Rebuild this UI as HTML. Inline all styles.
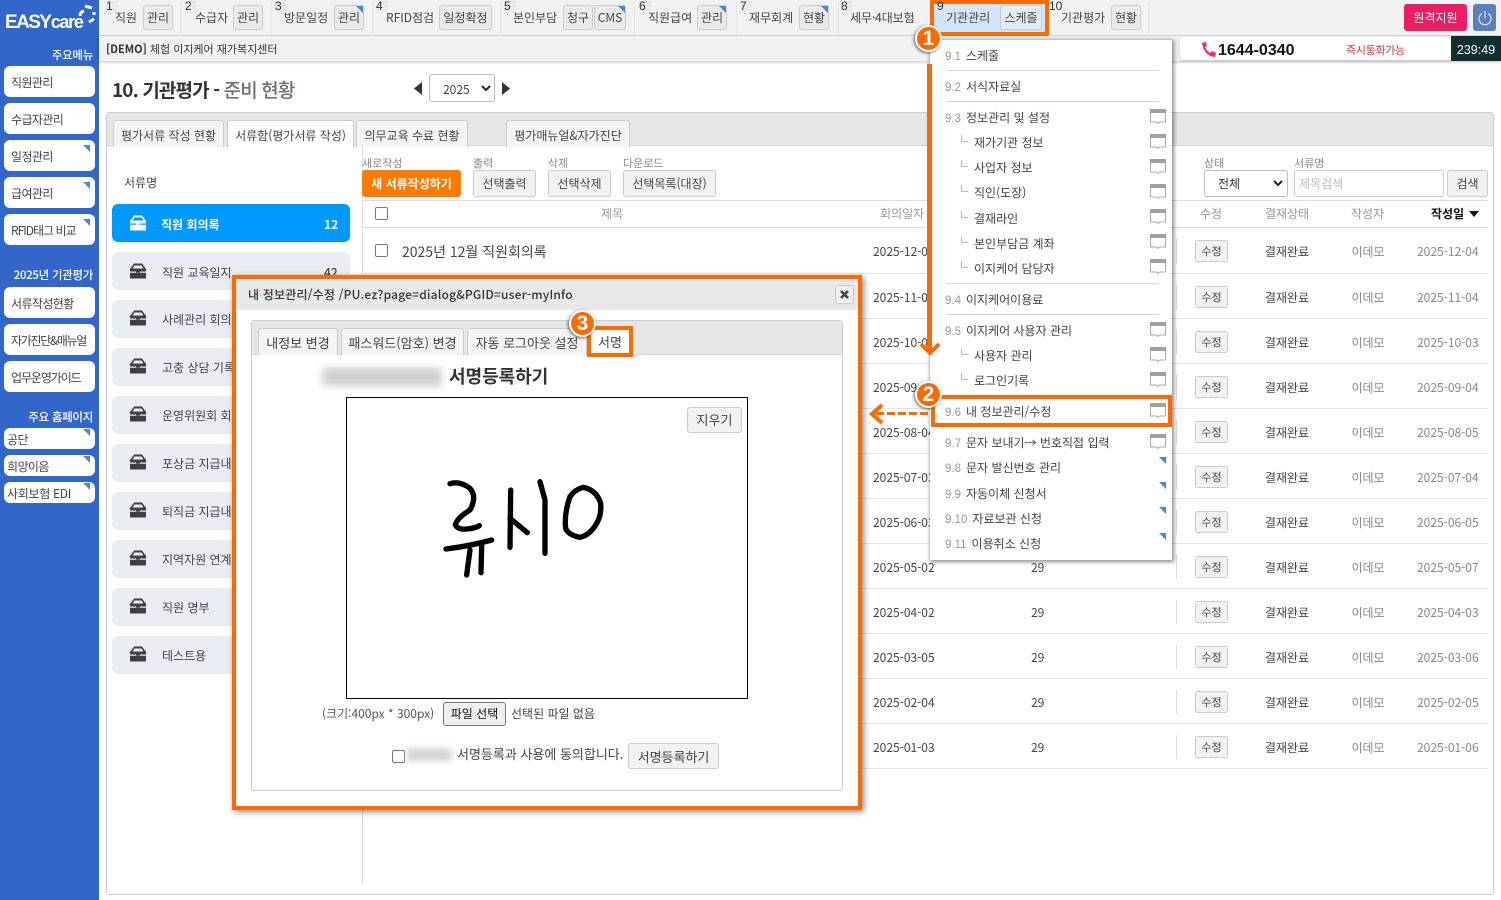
<!DOCTYPE html>
<html lang="ko"><head><meta charset="utf-8"><title>기관평가</title>
<style>
*{box-sizing:border-box}
html,body{margin:0;padding:0;width:1501px;height:900px;overflow:hidden;background:#fff}
body{position:relative;font:12px/20px "Noto Sans CJK KR","Liberation Sans",sans-serif;color:#444}
.a,.t,.b,.r{position:absolute}
.t{white-space:nowrap;height:20px;line-height:20px;margin-top:1px}
.z{margin-top:0}
.b{white-space:nowrap;text-align:center;background:#f2f2f2;border:1px solid #ccc;border-radius:3px;color:#444}
.nb{top:5px;height:25px;line-height:23px;background:#e9eaea}
.n{top:0;width:12px;height:12px;line-height:11px;background:#e9eaec;color:#333;font-size:12px;font-family:"Liberation Sans",sans-serif}
.tri{position:absolute;width:0;height:0;border-top:7px solid #4a86d8;border-left:7px solid transparent}
.s{left:4px;width:91px;background:#fff;border-radius:6px;color:#444;padding-left:7px;padding-top:1px;letter-spacing:-.6px}
.sh{left:0;width:93px;text-align:right;color:#fff;font-weight:500;font-size:11.5px;letter-spacing:-.3px;margin-top:0}
.tab{top:120px;height:27px;background:#f4f4f4;border:1px solid #ccc;border-bottom:0;border-radius:3px 3px 0 0;text-align:center;line-height:30px}
.dt{top:328px;font-size:13px;line-height:27px}
.li{left:112px;width:238px;height:38px;background:#ebedf4;border-radius:6px}
.lbl{top:153px;font-size:11px;color:#888;margin-top:0}
.tb{top:170px;height:27px;line-height:27px}
.hl{height:1px;background:#e4e4e4;left:362px;width:1126px}
.c{text-align:center;transform:translateX(-50%)}
.m{left:945px;color:#444;height:20px}
.m i{font-style:normal;color:#999;margin-right:5px;font-family:"Liberation Sans",sans-serif;font-size:11.5px}
.sub{left:974px;color:#444}
.sp{left:946px;width:213px;height:1px;background:#d8d8d8}
.x{left:961px;width:7px;height:7px;border-left:1px solid #bbb;border-bottom:1px solid #bbb}
.bd{width:27px;height:27px;border-radius:50%;background:#ff6a00;border:2px solid #fff;box-shadow:-1px 1px 3px rgba(0,0,0,.6);color:#fff;font:bold 21px/23px 'Liberation Sans',sans-serif;text-align:center}
</style></head><body>

<!-- Sidebar -->
<div class="a" style="left:0;top:0;width:99px;height:900px;background:#3366c9"></div>
<div class="t z" style="left:5px;top:10px;color:#fff;font:bold 19px/24px 'Liberation Sans',sans-serif;letter-spacing:-1.6px;height:24px;word-spacing:-3px">EASY <span style="font-weight:bold;font-size:18px;letter-spacing:-1.3px">care</span></div>
<svg class="a" style="left:76px;top:3px" width="22" height="22" viewBox="0 0 22 22" fill="none" stroke="#fff" stroke-width="3"><path d="M4 13 Q4 9 8 8"/><path d="M9 3 L16 5"/><path d="M18 9 L18 12"/><path d="M18 16 L13 19"/></svg>
<div class="t sh" style="top:45px">주요메뉴</div>
<div class="a s" style="top:66px;height:31px;line-height:31px">직원관리</div>
<div class="a s" style="top:103px;height:31px;line-height:31px">수급자관리</div>
<div class="a s" style="top:140px;height:31px;line-height:31px">일정관리<span class="tri" style="right:5px;top:5px"></span></div>
<div class="a s" style="top:177px;height:31px;line-height:31px">급여관리<span class="tri" style="right:5px;top:5px"></span></div>
<div class="a s" style="top:214px;height:31px;line-height:31px;letter-spacing:-1px">RFID태그 비교<span class="tri" style="right:5px;top:5px"></span></div>
<div class="t sh" style="top:265px">2025년 기관평가</div>
<div class="a s" style="top:287px;height:31px;line-height:31px">서류작성현황</div>
<div class="a s" style="top:324px;height:31px;line-height:31px;letter-spacing:-1.3px">자가진단&amp;매뉴얼</div>
<div class="a s" style="top:361px;height:31px;line-height:31px;letter-spacing:-1.1px">업무운영가이드</div>
<div class="t sh" style="top:407px">주요 홈페이지</div>
<div class="a s" style="top:428px;height:21px;line-height:21px;padding-left:3px">공단<span class="tri" style="right:5px;top:1px"></span></div>
<div class="a s" style="top:455px;height:21px;line-height:21px;padding-left:3px">희망이음<span class="tri" style="right:5px;top:1px"></span></div>
<div class="a s" style="top:482px;height:21px;line-height:21px;padding-left:3px;letter-spacing:-.3px">사회보험 EDI<span class="tri" style="right:5px;top:1px"></span></div>

<!-- Top bar -->
<div class="a" style="left:99px;top:0;width:1402px;height:36px;background:#f1f2f4;border-bottom:1px solid #dcdcdc"></div>
<div class="a" style="left:99px;top:36px;width:1402px;height:25px;background:#f1f2f4;box-shadow:0 1px 3px rgba(0,0,0,.25)"></div>
<div class="a" style="left:180px;top:2px;width:1px;height:32px;background:#e6e6e6"></div>
<div class="a" style="left:271px;top:2px;width:1px;height:32px;background:#e6e6e6"></div>
<div class="a" style="left:372px;top:2px;width:1px;height:32px;background:#e6e6e6"></div>
<div class="a" style="left:500px;top:2px;width:1px;height:32px;background:#e6e6e6"></div>
<div class="a" style="left:634px;top:2px;width:1px;height:32px;background:#e6e6e6"></div>
<div class="a" style="left:736px;top:2px;width:1px;height:32px;background:#e6e6e6"></div>
<div class="a" style="left:838px;top:2px;width:1px;height:32px;background:#e6e6e6"></div>
<div class="a" style="left:1148px;top:2px;width:1px;height:32px;background:#e6e6e6"></div>

<div class="t n" style="left:106px">1</div><div class="t" style="left:115px;top:7px">직원</div><div class="b nb" style="left:143px;width:30px">관리</div>
<div class="t n" style="left:185px">2</div><div class="t" style="left:195px;top:7px">수급자</div><div class="b nb" style="left:233px;width:30px">관리</div>
<div class="t n" style="left:275px">3</div><div class="t" style="left:284px;top:7px">방문일정</div><div class="b nb" style="left:334px;width:30px">관리<span class="tri" style="right:0;top:0"></span></div>
<div class="t n" style="left:376px">4</div><div class="t" style="left:386px;top:7px">RFID점검</div><div class="b nb" style="left:439px;width:53px">일정확정</div>
<div class="t n" style="left:504px">5</div><div class="t" style="left:513px;top:7px">본인부담</div><div class="b nb" style="left:563px;width:30px">청구</div><div class="b nb" style="left:594px;width:32px">CMS<span class="tri" style="right:0;top:0"></span></div>
<div class="t n" style="left:639px">6</div><div class="t" style="left:648px;top:7px">직원급여</div><div class="b nb" style="left:697px;width:30px">관리<span class="tri" style="right:0;top:0"></span></div>
<div class="t n" style="left:740px">7</div><div class="t" style="left:749px;top:7px">재무회계</div><div class="b nb" style="left:799px;width:30px">현황<span class="tri" style="right:0;top:0"></span></div>
<div class="t n" style="left:841px">8</div><div class="t" style="left:850px;top:7px;letter-spacing:-.1px">세무·4대보험</div>

<div class="a" style="left:930px;top:0;width:118px;height:36px;background:#d3e5f8"></div>
<div class="t" style="left:946px;top:7px">기관관리</div><div class="b nb" style="left:1000px;width:42px;background:#e4ecf3;border-color:#bcd">스케줄</div>
<div class="a" style="left:930px;top:0;width:119px;height:36px;border:4px solid #ff6a00"></div>
<div class="t n" style="left:937px;background:none">9</div>
<div class="t n" style="left:1049px;width:14px;background:none">10</div><div class="t" style="left:1061px;top:7px">기관평가</div><div class="b nb" style="left:1111px;width:30px">현황</div>

<div class="a" style="left:1404px;top:4px;width:63px;height:27px;background:#e91e63;border-radius:3px;color:#fff;text-align:center;line-height:27px">원격지원</div>
<div class="a" style="left:1473px;top:4px;width:23px;height:27px;background:#5a7fbb;border-radius:3px"></div>
<svg class="a" style="left:1477px;top:10px" width="16" height="16" viewBox="0 0 16 16" fill="none" stroke="#dfe6f2" stroke-width="1.2"><path d="M5 3.5 A6 6 0 1 0 11 3.5"/><path d="M8 1 V8"/></svg>

<div class="t z" style="left:106px;top:39px;font-size:11px;color:#333"><b style="font-weight:700">[DEMO]</b> 체험 이지케어 재가복지센터</div>

<div class="a" style="left:1180px;top:37px;width:272px;height:23px;background:#fff;border-radius:3px;box-shadow:0 1px 2px rgba(0,0,0,.2)"></div>
<svg class="a" style="left:1201px;top:42px" width="15" height="15" viewBox="0 0 15 15"><path d="M1 1 L5 0 L6 4 L4 5 Q6 9 9 11 L11 9 L15 11 L14 15 Q3 14 1 1Z" fill="#e8327c"/></svg>
<div class="t" style="left:1218px;top:40px;font:bold 16px/20px 'Liberation Sans',sans-serif;color:#111">1644-0340</div>
<div class="t" style="left:1346px;top:39px;font-size:11px;color:#d9363e;letter-spacing:-.3px">즉시통화가능</div>
<div class="a" style="left:1451px;top:36px;width:50px;height:25px;background:#0d2f31;color:#fff;text-align:center;font:12.5px/28px 'Liberation Sans',sans-serif">239:49</div>

<!-- Heading -->
<div class="t z" style="left:112px;top:78px;font-size:19px;line-height:24px;height:24px;font-weight:700;color:#333;letter-spacing:-.9px">10. 기관평가 - <span style="color:#6b7078;font-weight:500">준비 현황</span></div>
<svg class="a" style="left:414px;top:82px" width="9" height="13"><path d="M8 0V13L0 6.5Z" fill="#333"/></svg>
<div class="a" style="left:429px;top:74px;width:66px;height:28px;border:1px solid #bbb;border-radius:3px;background:#fff;padding-left:13px;line-height:29px;color:#444">2025</div>
<svg class="a" style="left:481px;top:85px" width="10" height="7" fill="none" stroke="#222" stroke-width="2"><path d="M1 1L5 5L9 1"/></svg>
<svg class="a" style="left:502px;top:82px" width="9" height="13"><path d="M0 0V13L8 6.5Z" fill="#333"/></svg>

<!-- Main panel -->
<div class="a" style="left:106px;top:112px;width:1388px;height:783px;border:1px solid #ccc;border-radius:3px;background:#fff"></div>
<div class="a" style="left:107px;top:113px;width:1386px;height:33px;background:#e6e6e6;border-bottom:1px solid #d4d4d4"></div>
<div class="a tab" style="left:113px;width:111px">평가서류 작성 현황</div>
<div class="a tab" style="left:227px;width:127px;background:#fff;height:28px">서류함(평가서류 작성)</div>
<div class="a tab" style="left:356px;width:112px">의무교육 수료 현황</div>
<div class="a tab" style="left:506px;width:124px">평가매뉴얼&amp;자가진단</div>

<div class="t" style="left:124px;top:172px">서류명</div>
<div class="a li" style="top:204px;background:#0099ff"></div>
<div class="t" style="left:161px;top:214px;color:#fff;font-weight:700">직원 회의록</div>
<div class="t" style="left:324px;top:214px;color:#fff;font-weight:700">12</div>
<svg class="a" style="left:130px;top:215px" width="16" height="16" viewBox="0 0 16 16"><path d="M4 .5H12L16 6V15.5H0V6Z" fill="#fff"/><path d="M4.5 2.5H11.5L13.5 5.5H2.5ZM0 8.5H6V10H10V8.5H16V9.8H0Z" fill="#0099ff"/></svg>

<div class="a li" style="top:252px"></div><div class="t" style="left:162px;top:262px">직원 교육일지</div><div class="t" style="left:324px;top:262px;font-weight:500">42</div>
<div class="a li" style="top:300px"></div><div class="t" style="left:162px;top:309px">사례관리 회의록</div>
<div class="a li" style="top:348px"></div><div class="t" style="left:162px;top:357px">고충 상담 기록</div>
<div class="a li" style="top:396px"></div><div class="t" style="left:162px;top:405px">운영위원회 회의록</div>
<div class="a li" style="top:444px"></div><div class="t" style="left:162px;top:453px">포상금 지급내역</div>
<div class="a li" style="top:492px"></div><div class="t" style="left:162px;top:501px">퇴직금 지급내역</div>
<div class="a li" style="top:540px"></div><div class="t" style="left:162px;top:549px">지역자원 연계</div>
<div class="a li" style="top:588px"></div><div class="t" style="left:162px;top:597px">직원 명부</div>
<div class="a li" style="top:636px"></div><div class="t" style="left:162px;top:645px">테스트용</div>
<svg width="0" height="0" style="position:absolute"><defs><symbol id="bx" viewBox="0 0 16 16"><path d="M4 .5H12L16 6V15.5H0V6Z" fill="#3f3f3f"/><path d="M4.5 2.5H11.5L13.5 5.5H2.5ZM0 8.5H6V10H10V8.5H16V9.8H0Z" fill="#ebedf4"/></symbol><symbol id="mon" viewBox="0 0 16 16"><path d="M.5 .5H15.5V13H9.5L8 14.5L6.5 13H.5Z" fill="#fff" stroke="#aaa"/><path d="M0 0H16V4H0Z" fill="#a0a0a0"/></symbol></defs></svg>
<svg class="a" style="left:130px;top:263px" width="16" height="16"><use href="#bx"/></svg>
<svg class="a" style="left:130px;top:310px" width="16" height="16"><use href="#bx"/></svg>
<svg class="a" style="left:130px;top:358px" width="16" height="16"><use href="#bx"/></svg>
<svg class="a" style="left:130px;top:406px" width="16" height="16"><use href="#bx"/></svg>
<svg class="a" style="left:130px;top:454px" width="16" height="16"><use href="#bx"/></svg>
<svg class="a" style="left:130px;top:502px" width="16" height="16"><use href="#bx"/></svg>
<svg class="a" style="left:130px;top:550px" width="16" height="16"><use href="#bx"/></svg>
<svg class="a" style="left:130px;top:598px" width="16" height="16"><use href="#bx"/></svg>
<svg class="a" style="left:130px;top:646px" width="16" height="16"><use href="#bx"/></svg>

<div class="a" style="left:362px;top:146px;width:1px;height:738px;background:#ddd"></div>

<!-- Toolbar -->
<div class="t lbl" style="left:362px">새로작성</div>
<div class="t lbl" style="left:473px">출력</div>
<div class="t lbl" style="left:548px">삭제</div>
<div class="t lbl" style="left:623px">다운로드</div>
<div class="t lbl" style="left:1204px">상태</div>
<div class="t lbl" style="left:1294px">서류명</div>
<div class="a tb" style="left:362px;width:99px;background:#ff7b00;color:#fff;font-weight:700;text-align:center;border-radius:3px;font-size:12px">새 서류작성하기</div>
<div class="b tb" style="left:473px;width:63px;line-height:26px">선택출력</div>
<div class="b tb" style="left:548px;width:63px;line-height:26px">선택삭제</div>
<div class="b tb" style="left:623px;width:93px;line-height:26px">선택목록(대장)</div>
<div class="a tb" style="left:1204px;width:84px;border:1px solid #bbb;border-radius:3px;background:#fff;padding-left:13px;line-height:25px;color:#333">전체</div>
<svg class="a" style="left:1273px;top:180px" width="10" height="7" fill="none" stroke="#222" stroke-width="2"><path d="M1 1L5 5L9 1"/></svg>
<div class="a tb" style="left:1294px;width:150px;border:1px solid #ccc;border-radius:3px;background:#fff;padding-left:4px;line-height:25px;color:#bbb">제목검색</div>
<div class="b tb" style="left:1447px;width:41px;line-height:26px">검색</div>

<!-- Table -->
<div class="a hl" style="top:200px;background:#ddd"></div><div class="a hl" style="top:227px;background:#ddd"></div>
<div class="a" style="left:375px;top:207px;width:13px;height:13px;border:1px solid #767676;border-radius:2px;background:#fff"></div>
<div class="t z" style="left:601px;top:204px;color:#999">제목</div>
<div class="t z" style="left:880px;top:204px;color:#999">회의일자</div>
<div class="t z" style="left:1200px;top:204px;color:#999">수정</div>
<div class="t z" style="left:1265px;top:204px;color:#999">결재상태</div>
<div class="t z" style="left:1351px;top:204px;color:#999">작성자</div>
<div class="t z" style="left:1431px;top:204px;color:#111;font-weight:700">작성일</div>
<svg class="a" style="left:1469px;top:211px" width="10" height="6"><path d="M0 0H10L5 6Z" fill="#111"/></svg>

<div class="a" style="left:375px;top:244px;width:13px;height:13px;border:1px solid #767676;border-radius:2px;background:#fff"></div>
<div class="t" style="left:402px;top:241px;font-size:14px;color:#444">2025년 12월 직원회의록</div>

<div class="a hl" style="top:273px"></div><div class="a hl" style="top:318px"></div><div class="a hl" style="top:363px"></div><div class="a hl" style="top:408px"></div><div class="a hl" style="top:453px"></div><div class="a hl" style="top:498px"></div><div class="a hl" style="top:543px"></div><div class="a hl" style="top:588px"></div><div class="a hl" style="top:633px"></div><div class="a hl" style="top:678px"></div><div class="a hl" style="top:723px"></div><div class="a hl" style="top:768px"></div>

<div class="t" style="left:873px;top:241px">2025-12-02</div><div class="t" style="left:1031px;top:241px">29</div><div class="a" style="left:1176px;top:239px;width:1px;height:24px;background:#ddd"></div><div class="b" style="left:1195px;top:240px;width:33px;height:22px;line-height:20px;font-size:11px">수정</div><div class="t c" style="left:1287px;top:241px">결재완료</div><div class="t c" style="left:1368px;top:241px;color:#888">이데모</div><div class="t" style="left:1417px;top:241px;color:#888">2025-12-04</div>
<div class="t" style="left:873px;top:287px">2025-11-03</div><div class="a" style="left:1176px;top:285px;width:1px;height:24px;background:#ddd"></div><div class="b" style="left:1195px;top:286px;width:33px;height:22px;line-height:20px;font-size:11px">수정</div><div class="t c" style="left:1287px;top:287px">결재완료</div><div class="t c" style="left:1368px;top:287px;color:#888">이데모</div><div class="t" style="left:1417px;top:287px;color:#888">2025-11-04</div>
<div class="t" style="left:873px;top:332px">2025-10-02</div><div class="a" style="left:1176px;top:330px;width:1px;height:24px;background:#ddd"></div><div class="b" style="left:1195px;top:331px;width:33px;height:22px;line-height:20px;font-size:11px">수정</div><div class="t c" style="left:1287px;top:332px">결재완료</div><div class="t c" style="left:1368px;top:332px;color:#888">이데모</div><div class="t" style="left:1417px;top:332px;color:#888">2025-10-03</div>
<div class="t" style="left:873px;top:377px">2025-09-03</div><div class="a" style="left:1176px;top:375px;width:1px;height:24px;background:#ddd"></div><div class="b" style="left:1195px;top:376px;width:33px;height:22px;line-height:20px;font-size:11px">수정</div><div class="t c" style="left:1287px;top:377px">결재완료</div><div class="t c" style="left:1368px;top:377px;color:#888">이데모</div><div class="t" style="left:1417px;top:377px;color:#888">2025-09-04</div>
<div class="t" style="left:873px;top:422px">2025-08-04</div><div class="a" style="left:1176px;top:420px;width:1px;height:24px;background:#ddd"></div><div class="b" style="left:1195px;top:421px;width:33px;height:22px;line-height:20px;font-size:11px">수정</div><div class="t c" style="left:1287px;top:422px">결재완료</div><div class="t c" style="left:1368px;top:422px;color:#888">이데모</div><div class="t" style="left:1417px;top:422px;color:#888">2025-08-05</div>
<div class="t" style="left:873px;top:467px">2025-07-03</div><div class="a" style="left:1176px;top:465px;width:1px;height:24px;background:#ddd"></div><div class="b" style="left:1195px;top:466px;width:33px;height:22px;line-height:20px;font-size:11px">수정</div><div class="t c" style="left:1287px;top:467px">결재완료</div><div class="t c" style="left:1368px;top:467px;color:#888">이데모</div><div class="t" style="left:1417px;top:467px;color:#888">2025-07-04</div>
<div class="t" style="left:873px;top:512px">2025-06-03</div><div class="a" style="left:1176px;top:510px;width:1px;height:24px;background:#ddd"></div><div class="b" style="left:1195px;top:511px;width:33px;height:22px;line-height:20px;font-size:11px">수정</div><div class="t c" style="left:1287px;top:512px">결재완료</div><div class="t c" style="left:1368px;top:512px;color:#888">이데모</div><div class="t" style="left:1417px;top:512px;color:#888">2025-06-05</div>
<div class="t" style="left:873px;top:557px">2025-05-02</div><div class="t" style="left:1031px;top:557px">29</div><div class="a" style="left:1176px;top:555px;width:1px;height:24px;background:#ddd"></div><div class="b" style="left:1195px;top:556px;width:33px;height:22px;line-height:20px;font-size:11px">수정</div><div class="t c" style="left:1287px;top:557px">결재완료</div><div class="t c" style="left:1368px;top:557px;color:#888">이데모</div><div class="t" style="left:1417px;top:557px;color:#888">2025-05-07</div>
<div class="t" style="left:873px;top:602px">2025-04-02</div><div class="t" style="left:1031px;top:602px">29</div><div class="a" style="left:1176px;top:600px;width:1px;height:24px;background:#ddd"></div><div class="b" style="left:1195px;top:601px;width:33px;height:22px;line-height:20px;font-size:11px">수정</div><div class="t c" style="left:1287px;top:602px">결재완료</div><div class="t c" style="left:1368px;top:602px;color:#888">이데모</div><div class="t" style="left:1417px;top:602px;color:#888">2025-04-03</div>
<div class="t" style="left:873px;top:647px">2025-03-05</div><div class="t" style="left:1031px;top:647px">29</div><div class="a" style="left:1176px;top:645px;width:1px;height:24px;background:#ddd"></div><div class="b" style="left:1195px;top:646px;width:33px;height:22px;line-height:20px;font-size:11px">수정</div><div class="t c" style="left:1287px;top:647px">결재완료</div><div class="t c" style="left:1368px;top:647px;color:#888">이데모</div><div class="t" style="left:1417px;top:647px;color:#888">2025-03-06</div>
<div class="t" style="left:873px;top:692px">2025-02-04</div><div class="t" style="left:1031px;top:692px">29</div><div class="a" style="left:1176px;top:690px;width:1px;height:24px;background:#ddd"></div><div class="b" style="left:1195px;top:691px;width:33px;height:22px;line-height:20px;font-size:11px">수정</div><div class="t c" style="left:1287px;top:692px">결재완료</div><div class="t c" style="left:1368px;top:692px;color:#888">이데모</div><div class="t" style="left:1417px;top:692px;color:#888">2025-02-05</div>
<div class="t" style="left:873px;top:737px">2025-01-03</div><div class="t" style="left:1031px;top:737px">29</div><div class="a" style="left:1176px;top:735px;width:1px;height:24px;background:#ddd"></div><div class="b" style="left:1195px;top:736px;width:33px;height:22px;line-height:20px;font-size:11px">수정</div><div class="t c" style="left:1287px;top:737px">결재완료</div><div class="t c" style="left:1368px;top:737px;color:#888">이데모</div><div class="t" style="left:1417px;top:737px;color:#888">2025-01-06</div>

<!-- Dropdown menu -->
<div class="a" style="left:930px;top:40px;width:242px;height:520px;background:#fff;box-shadow:1px 1px 4px 1px rgba(0,0,0,.45)"></div>
<div class="t m" style="top:45px"><i>9.1</i>스케줄</div><div class="a sp" style="top:70px"></div>
<div class="t m" style="top:76px"><i>9.2</i>서식자료실</div><div class="a sp" style="top:101px"></div>
<div class="t m" style="top:107px"><i>9.3</i>정보관리 및 설정</div>
<div class="a x" style="top:135px"></div><div class="t sub" style="top:132px">재가기관 정보</div>
<div class="a x" style="top:160px"></div><div class="t sub" style="top:157px">사업자 정보</div>
<div class="a x" style="top:185px"></div><div class="t sub" style="top:182px">직인(도장)</div>
<div class="a x" style="top:211px"></div><div class="t sub" style="top:208px">결재라인</div>
<div class="a x" style="top:236px"></div><div class="t sub" style="top:233px">본인부담금 계좌</div>
<div class="a x" style="top:261px"></div><div class="t sub" style="top:258px">이지케어 담당자</div>
<div class="a sp" style="top:283px"></div>
<div class="t m" style="top:289px"><i>9.4</i>이지케어이용료</div><div class="a sp" style="top:314px"></div>
<div class="t m" style="top:320px"><i>9.5</i>이지케어 사용자 관리</div>
<div class="a x" style="top:348px"></div><div class="t sub" style="top:345px">사용자 관리</div>
<div class="a x" style="top:373px"></div><div class="t sub" style="top:370px">로그인기록</div>
<div class="t m" style="top:401px"><i>9.6</i>내 정보관리/수정</div>
<div class="t m" style="top:432px"><i>9.7</i>문자 보내기→ 번호직접 입력</div>
<div class="t m" style="top:457px"><i>9.8</i>문자 발신번호 관리</div>
<div class="t m" style="top:483px"><i>9.9</i>자동이체 신청서</div>
<div class="t m" style="top:508px"><i>9.10</i>자료보관 신청</div>
<div class="t m" style="top:533px"><i>9.11</i>이용취소 신청</div>
<svg class="a" style="left:1150px;top:109px" width="16" height="16"><use href="#mon"/></svg>
<svg class="a" style="left:1150px;top:134px" width="16" height="16"><use href="#mon"/></svg>
<svg class="a" style="left:1150px;top:159px" width="16" height="16"><use href="#mon"/></svg>
<svg class="a" style="left:1150px;top:184px" width="16" height="16"><use href="#mon"/></svg>
<svg class="a" style="left:1150px;top:209px" width="16" height="16"><use href="#mon"/></svg>
<svg class="a" style="left:1150px;top:234px" width="16" height="16"><use href="#mon"/></svg>
<svg class="a" style="left:1150px;top:259px" width="16" height="16"><use href="#mon"/></svg>
<svg class="a" style="left:1150px;top:322px" width="16" height="16"><use href="#mon"/></svg>
<svg class="a" style="left:1150px;top:347px" width="16" height="16"><use href="#mon"/></svg>
<svg class="a" style="left:1150px;top:372px" width="16" height="16"><use href="#mon"/></svg>
<svg class="a" style="left:1150px;top:403px" width="16" height="16"><use href="#mon"/></svg>
<svg class="a" style="left:1150px;top:434px" width="16" height="16"><use href="#mon"/></svg>
<span class="tri" style="left:1159px;top:457px"></span>
<span class="tri" style="left:1159px;top:482px"></span>
<span class="tri" style="left:1159px;top:507px"></span>
<span class="tri" style="left:1159px;top:533px"></span>

<!-- Annotations -->
<div class="a" style="left:927px;top:64px;width:5px;height:288px;background:#ff6a00"></div>
<svg class="a" style="left:918px;top:341px" width="24" height="18" fill="none" stroke="#ff6a00" stroke-width="4"><path d="M3 3L12 12L21 3"/></svg>
<div class="a" style="left:931px;top:395px;width:241px;height:32px;border:4px solid #ff6a00"></div>
<div class="a" style="left:876px;top:412px;width:55px;height:3px;background:repeating-linear-gradient(90deg,#ff6a00 0 8px,transparent 8px 11px)"></div>
<svg class="a" style="left:868px;top:402px" width="18" height="24" fill="none" stroke="#ff6a00" stroke-width="4"><path d="M14 3L4 12L14 21"/></svg>

<!-- Dialog -->
<div class="a" style="left:232px;top:275px;width:630px;height:535px;background:#fff;border:4px solid #ff6a00;box-shadow:2px 2px 6px rgba(0,0,0,.45)"></div>
<div class="a" style="left:236px;top:279px;width:622px;height:31px;background:#e9e9e9"></div>
<div class="t z" style="left:248px;top:285px;font-weight:500;color:#333;letter-spacing:.2px">내 정보관리/수정 /PU.ez?page=dialog&amp;PGID=user-myInfo</div>
<div class="a" style="left:835px;top:285px;width:19px;height:19px;background:#efefef;border:1px solid #ccc;border-radius:3px"></div>
<svg class="a" style="left:840px;top:290px" width="9" height="9" stroke="#444" stroke-width="2.6"><path d="M1 1L8 8M8 1L1 8"/></svg>

<div class="a" style="left:251px;top:320px;width:592px;height:471px;border:1px solid #ccc;border-radius:3px"></div>
<div class="a" style="left:252px;top:321px;width:590px;height:34px;background:#e6e6e6;border-bottom:1px solid #d4d4d4"></div>
<div class="a tab dt" style="left:258px;width:80px">내정보 변경</div>
<div class="a tab dt" style="left:341px;width:123px">패스워드(암호) 변경</div>
<div class="a tab dt" style="left:467px;width:120px">자동 로그아웃 설정</div>
<div class="a tab dt" style="left:587px;width:46px;background:#fff;border:0">서명</div>
<div class="a" style="left:587px;top:326px;width:46px;height:31px;border:4px solid #ff6a00"></div>

<div class="a" style="left:322px;top:368px;width:120px;height:18px;background:#c4c4c4;filter:blur(4px);opacity:.8"></div>
<div class="t z" style="left:449px;top:366px;font-size:18px;line-height:20px;font-weight:700;color:#333">서명등록하기</div>

<div class="a" style="left:346px;top:397px;width:402px;height:302px;border:1px solid #000;background:#fff"></div>
<div class="b" style="left:687px;top:407px;width:55px;height:26px;line-height:24px;font-size:13px">지우기</div>
<svg class="a" style="left:420px;top:460px" width="200" height="130" viewBox="0 0 600 390" fill="none" stroke="#000" stroke-width="16" stroke-linecap="round" stroke-linejoin="round">
<path d="M90 71Q120 62 150 85Q172 110 150 150Q110 175 106 195Q115 210 140 207Q165 205 178 197"/>
<path d="M78 267Q150 258 215 240"/>
<path d="M150 270L140 345"/>
<path d="M185 255L183 338"/>
<path d="M272 90L270 262"/>
<path d="M270 175L322 218"/>
<path d="M360 65L375 120L375 280"/>
<path d="M490 82Q530 90 542 130Q545 165 530 190Q510 225 480 232Q445 225 437 205Q432 160 450 110Q465 88 490 82Z"/>
</svg>

<div class="t z" style="left:322px;top:704px;color:#555">(크기:400px * 300px)</div>
<div class="a" style="left:443px;top:702px;width:63px;height:24px;background:#efefef;border:1px solid #767676;border-radius:3px;text-align:center;line-height:22px;color:#111">파일 선택</div>
<div class="t z" style="left:511px;top:704px;color:#444">선택된 파일 없음</div>

<div class="a" style="left:392px;top:750px;width:13px;height:13px;border:1px solid #767676;border-radius:2px;background:#fff"></div>
<div class="a" style="left:407px;top:748px;width:45px;height:13px;background:#d6d6d6;filter:blur(3px)"></div>
<div class="t" style="left:457px;top:743px;font-size:13px">서명등록과 사용에 동의합니다.</div>
<div class="b" style="left:628px;top:743px;width:91px;height:26px;line-height:25px;font-size:13px">서명등록하기</div>

<!-- Number badges -->
<div class="a bd" style="left:915px;top:25px">1</div>
<div class="a bd" style="left:915px;top:381px">2</div>
<div class="a bd" style="left:569px;top:310px">3</div>

</body></html>
